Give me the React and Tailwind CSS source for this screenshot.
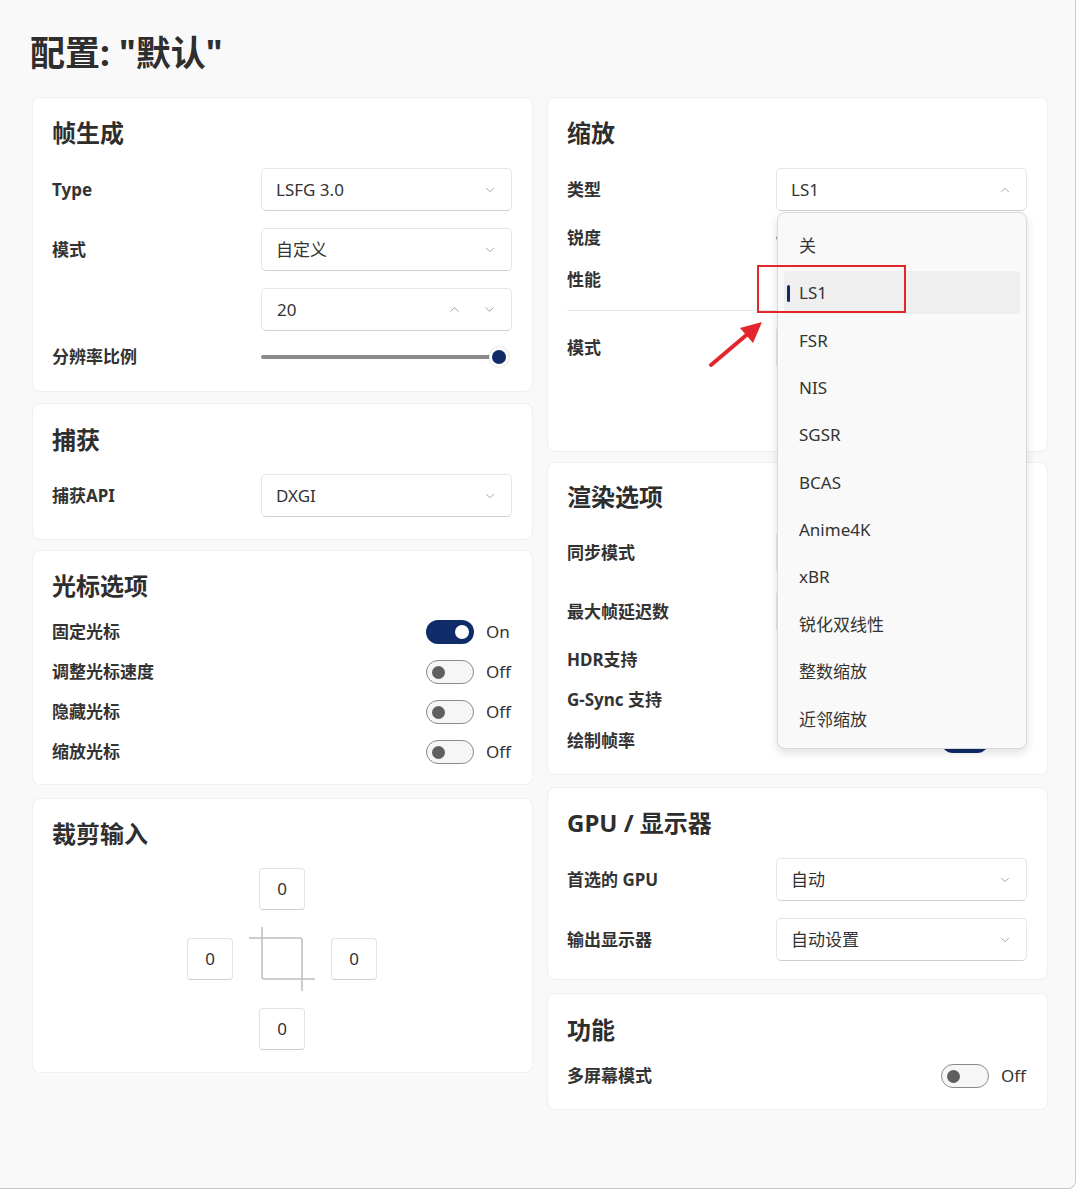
import { ChevronDown, ChevronUp } from "lucide-react";

const font = { fontFamily: '"Noto Sans", "Noto Sans CJK SC", sans-serif' };

function Card({ title, className = "", children }) {
  return (
    <div className={`bg-white rounded-[8px] border border-[#efefef] pl-[19px] pr-5 ${className}`}>
      <h2 className="h-[32px] text-[24px] leading-[32px] font-bold text-[#2e2e2e]">{title}</h2>
      {children}
    </div>
  );
}

function Select({ value, open }) {
  return (
    <div className="w-[251px] h-[43px] bg-white border border-[#e6e6e6] border-b-[#d0d0d0] rounded-[5px] flex items-center justify-between pl-[14px] pr-[14px]">
      <span className="text-[17px] text-[#333]">{value}</span>
      {open ? (
        <ChevronUp size={14} strokeWidth={1.5} color="#9a9a9a" />
      ) : (
        <ChevronDown size={14} strokeWidth={1.5} color="#9a9a9a" />
      )}
    </div>
  );
}

function Row({ label, children, className = "" }) {
  return (
    <div className={`flex items-center justify-between ${className}`}>
      <span className="text-[17px] font-bold text-[#333]">{label}</span>
      {children}
    </div>
  );
}

function Toggle({ on }) {
  return (
    <div className="flex items-center gap-[12px]">
      {on ? (
        <div className="w-[48px] h-[24px] rounded-full bg-[#0f2c69] flex items-center justify-end pr-[5px]">
          <div className="w-[14px] h-[14px] rounded-full bg-white" />
        </div>
      ) : (
        <div className="w-[48px] h-[24px] rounded-full bg-[#f6f6f6] border border-[#8a8a8a] flex items-center pl-[5px]">
          <div className="w-[13px] h-[13px] rounded-full bg-[#5f5f5f]" />
        </div>
      )}
      <span className="w-[26px] text-[17px] text-[#333]">{on ? "On" : "Off"}</span>
    </div>
  );
}

function CropBox() {
  return (
    <div className="w-[46px] h-[42px] bg-white border border-[#e2e2e2] border-b-[#cfcfcf] rounded-[4px] flex items-center justify-center text-[17px] text-[#333]">
      0
    </div>
  );
}

const scaleOptions = ["关", "LS1", "FSR", "NIS", "SGSR", "BCAS", "Anime4K", "xBR", "锐化双线性", "整数缩放", "近邻缩放"];

export default function App() {
  return (
    <div style={font} className="w-[1076px] h-[1189px] bg-[#f9f9f9] border-r border-b border-[#c9c9c9] rounded-br-[8px] relative">
      <h1 className="pl-[30px] pt-[31px] h-[97px] text-[35px] leading-[44px] font-bold text-[#2e2e2e]">配置: "默认"</h1>

      <div className="flex gap-[14px] pl-[32px]">
        {/* left column */}
        <div className="w-[501px] flex flex-col">
          <Card title="帧生成" className="h-[295px] pt-[19px]">
            <Row label="Type" className="mt-[19px]">
              <Select value="LSFG 3.0" />
            </Row>
            <Row label="模式" className="mt-[17px]">
              <Select value="自定义" />
            </Row>
            <div className="flex justify-end mt-[17px]">
              <div className="w-[251px] h-[43px] bg-white border border-[#e6e6e6] border-b-[#d0d0d0] rounded-[5px] flex items-center pl-[15px] pr-[14px]">
                <span className="text-[17px] text-[#333] flex-1">20</span>
                <ChevronUp size={15} strokeWidth={1.5} color="#9a9a9a" className="mr-[20px]" />
                <ChevronDown size={15} strokeWidth={1.5} color="#9a9a9a" />
              </div>
            </div>
            <Row label="分辨率比例" className="h-[24px] mt-[14px]">
              <div className="w-[251px] flex items-center">
                <div className="w-[230px] h-[4px] rounded-full bg-[#8b8b8b]" />
                <div className="w-[20px] h-[20px] -ml-[2px] rounded-full bg-white shadow-[0_0_2px_rgba(0,0,0,0.25)] flex items-center justify-center">
                  <div className="w-[14px] h-[14px] rounded-full bg-[#0f2c69]" />
                </div>
              </div>
            </Row>
          </Card>

          <Card title="捕获" className="h-[137px] pt-[20px] mt-[11px]">
            <Row label="捕获API" className="mt-[18px]">
              <Select value="DXGI" />
            </Row>
          </Card>

          <Card title="光标选项" className="h-[235px] pt-[19px] mt-[10px]">
            <div className="mt-[10px]">
              <Row label="固定光标" className="h-[40px]"><Toggle on /></Row>
              <Row label="调整光标速度" className="h-[40px]"><Toggle /></Row>
              <Row label="隐藏光标" className="h-[40px]"><Toggle /></Row>
              <Row label="缩放光标" className="h-[40px]"><Toggle /></Row>
            </div>
          </Card>

          <Card title="裁剪输入" className="h-[275px] pt-[19px] mt-[13px]">
            <div className="mt-[18px] grid grid-cols-[46px_46px_46px] grid-rows-[42px_42px_42px] gap-x-[26px] gap-y-[28px] justify-center">
              <div />
              <CropBox />
              <div />
              <CropBox />
              <div className="h-[42px] flex items-center justify-center">
                <svg width="66" height="64" viewBox="0 0 66 64" className="shrink-0 -mx-[10px] -my-[11px]" fill="none" stroke="#bdbdbd" strokeWidth="1.5">
                  <path d="M13 0 V50 a2 2 0 0 0 2 2 H66" />
                  <path d="M0 11 H51 a2 2 0 0 1 2 2 V64" />
                </svg>
              </div>
              <CropBox />
              <div />
              <CropBox />
              <div />
            </div>
          </Card>
        </div>

        {/* right column */}
        <div className="w-[501px] flex flex-col">
          <Card title="缩放" className="h-[355px] pt-[19px]">
            <Row label="类型" className="mt-[19px]">
              <div className="relative">
                <Select value="LS1" open />
                <div className="absolute left-[1px] top-[44px] z-10 w-[250px] bg-[#f9f9f9] border border-[#d9d9d9] rounded-[8px] shadow-[0_4px_10px_rgba(0,0,0,0.12)] px-[6px] pt-[11px] pb-[7px] flex flex-col gap-[4.4px]">
                  {scaleOptions.map((o) => (
                    <div
                      key={o}
                      className={`h-[43px] rounded-[4px] flex items-center pl-[15px] relative text-[17px] text-[#333] ${o === "LS1" ? "bg-[#efefef]" : ""}`}
                    >
                      {o === "LS1" && <div className="absolute left-[3px] top-[14px] w-[3px] h-[17px] rounded-full bg-[#0f2c69]" />}
                      {o}
                    </div>
                  ))}
                </div>
              </div>
            </Row>
            <Row label="锐度" className="h-[40px] mt-[7px]">
              <div className="w-[251px] h-[4px] rounded-full bg-[#8b8b8b]" />
            </Row>
            <Row label="性能" className="h-[40px] mt-[2px]">
              <div className="w-[86px] h-[24px]" />
            </Row>
            <div className="h-px bg-[#e8e8e8] mt-[10px]" />
            <Row label="模式" className="mt-[15px]">
              <Select value="" />
            </Row>
          </Card>

          <Card title="渲染选项" className="h-[313px] pt-[18px] mt-[10px]">
            <Row label="同步模式" className="mt-[18px]">
              <Select value="" />
            </Row>
            <Row label="最大帧延迟数" className="mt-[16px]">
              <Select value="" />
            </Row>
            <Row label="HDR支持" className="h-[40px] mt-[7px]"><div className="w-[86px] h-[24px]" /></Row>
            <Row label="G-Sync 支持" className="h-[40px]"><div className="w-[86px] h-[24px]" /></Row>
            <Row label="绘制帧率" className="h-[40px] mt-[1px]"><Toggle on /></Row>
          </Card>

          <Card title="GPU / 显示器" className="h-[193px] pt-[19px] mt-[12px]">
            <Row label="首选的 GPU" className="mt-[19px]">
              <Select value="自动" />
            </Row>
            <Row label="输出显示器" className="mt-[17px]">
              <Select value="自动设置" />
            </Row>
          </Card>

          <Card title="功能" className="h-[117px] pt-[20px] mt-[13px]">
            <Row label="多屏幕模式" className="h-[40px] mt-[10px]"><Toggle /></Row>
          </Card>
        </div>
      </div>

      {/* annotation */}
      <div className="absolute left-[757px] top-[265px] w-[149px] h-[48px] border-2 border-[#e3262e] z-20" />
      <svg className="absolute left-[700px] top-[312px] z-20" width="70" height="62" viewBox="0 0 70 62">
        <line x1="11" y1="53" x2="50" y2="20" stroke="#e3262e" strokeWidth="4" strokeLinecap="round" />
        <polygon points="62,10 40,16 53,31" fill="#e3262e" />
      </svg>
    </div>
  );
}
